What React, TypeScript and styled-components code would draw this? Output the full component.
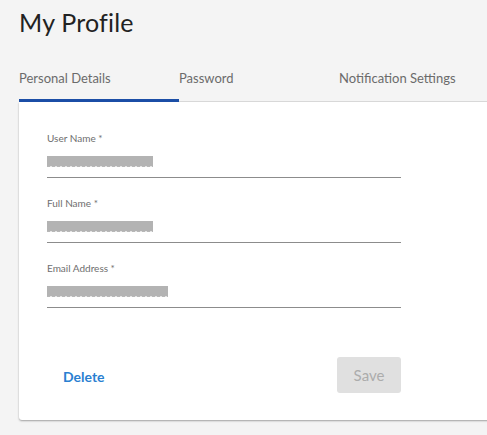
import React from "react";
import styled, { createGlobalStyle } from "styled-components";

const Global = createGlobalStyle`
  html, body { margin: 0; padding: 0; background: #f4f4f4; }
  body { font-family: "Lato", "Open Sans", sans-serif; }
  * { box-sizing: border-box; }
`;

const Page = styled.div`
  padding: 6px 0 0 19px;
  width: 487px;
  height: 435px;
  overflow: hidden;
`;

const Title = styled.h1`
  margin: 0;
  font-family: "Lato", sans-serif;
  font-weight: 400;
  font-size: 25px;
  line-height: 32px;
  color: #222;
  letter-spacing: 0.2px;
`;

const Tabs = styled.div`
  display: flex;
  margin-top: 22px;
  border-bottom: 1px solid #dcdcdc;
  width: 600px;
`;

const Tab = styled.div<{ $active?: boolean }>`
  width: 160px;
  height: 42px;
  padding-top: 10px;
  font-size: 13px;
  color: #6b6b6b;
  border-bottom: 3px solid ${(p) => (p.$active ? "#1b4ea6" : "transparent")};
  margin-bottom: -1px;
`;

const Card = styled.div`
  background: #fff;
  width: 600px;
  height: 318px;
  border-radius: 0 0 0 3px;
  box-shadow: 0 1px 2px rgba(0, 0, 0, 0.35);
  padding: 30px 0 0 28px;
  display: flex;
  flex-direction: column;
`;

const Field = styled.div`
  width: 354px;
  height: 46px;
  border-bottom: 1px solid #8c8c8c;
  margin-bottom: 19px;
  display: flex;
  flex-direction: column;
`;

const Label = styled.label`
  font-size: 10px;
  color: #6e6e6e;
  line-height: 12px;
`;

const Blur = styled.div`
  margin-top: 12px;
  height: 10px;
  background: #b3b3b3;
  position: relative;
  &::after {
    content: "";
    position: absolute;
    left: 0;
    right: 0;
    top: 10px;
    height: 1px;
    background: repeating-linear-gradient(90deg, #b8b8b8 0 3px, #e6e6e6 3px 5px);
  }
`;

const Actions = styled.div`
  display: flex;
  align-items: center;
  justify-content: space-between;
  width: 354px;
  margin-top: 30px;
`;

const DeleteBtn = styled.button`
  border: none;
  background: none;
  padding: 2px 0 0 16px;
  font-family: "Lato", sans-serif;
  font-weight: 700;
  font-size: 14px;
  color: #2a7fd1;
  cursor: pointer;
`;

const SaveBtn = styled.button`
  width: 64px;
  height: 36px;
  border: none;
  border-radius: 3px;
  background: #e0e0e0;
  color: #acacac;
  font-family: "Lato", sans-serif;
  font-size: 15px;
`;

const fields = [
  { label: "User Name *", w: 106 },
  { label: "Full Name *", w: 106 },
  { label: "Email Address *", w: 121 },
];

export default function App() {
  return (
    <>
      <Global />
      <Page>
        <Title>My Profile</Title>
        <Tabs>
          <Tab $active>Personal Details</Tab>
          <Tab>Password</Tab>
          <Tab>Notification Settings</Tab>
        </Tabs>
        <Card>
          {fields.map((f) => (
            <Field key={f.label}>
              <Label>{f.label}</Label>
              <Blur style={{ width: f.w }} />
            </Field>
          ))}
          <Actions>
            <DeleteBtn>Delete</DeleteBtn>
            <SaveBtn disabled>Save</SaveBtn>
          </Actions>
        </Card>
      </Page>
    </>
  );
}
